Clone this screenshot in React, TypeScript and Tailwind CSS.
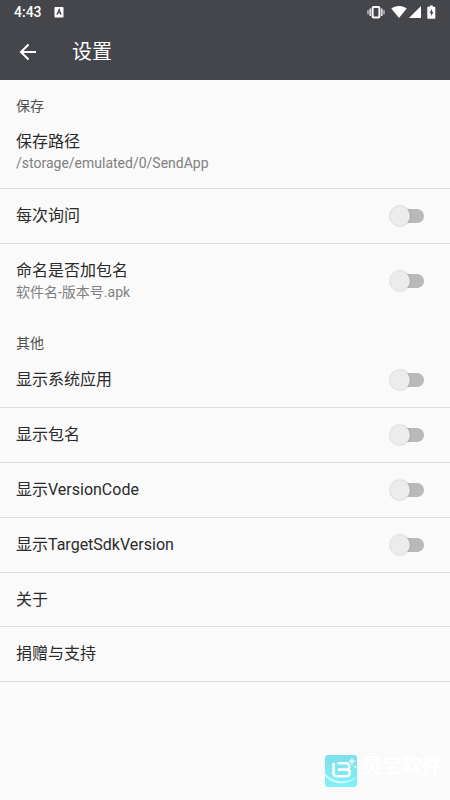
import { useState } from "react";

type Item = {
    id: string;
    title: string;
    summary?: string;
    toggle?: boolean;
};

const saveItems: Item[] = [
    { id: "path", title: "保存路径", summary: "/storage/emulated/0/SendApp" },
    { id: "ask", title: "每次询问", toggle: true },
    { id: "naming", title: "命名是否加包名", summary: "软件名-版本号.apk", toggle: true },
];

const otherItems: Item[] = [
    { id: "system", title: "显示系统应用", toggle: true },
    { id: "package", title: "显示包名", toggle: true },
    { id: "versionCode", title: "显示VersionCode", toggle: true },
    { id: "targetSdk", title: "显示TargetSdkVersion", toggle: true },
    { id: "about", title: "关于" },
    { id: "donate", title: "捐赠与支持" },
];

function StatusBar() {
    return (
        <div className="flex h-6 items-center justify-between px-3.5">
            <div className="flex items-center gap-3">
                <span className="text-sm leading-6 font-medium">4:43</span>
                <svg viewBox="0 0 10 12" className="h-3 w-2.5" aria-hidden="true">
                    <rect x="0.5" y="1" width="9" height="10.5" rx="0.8" fill="#fff" />
                    <path d="M3 8.8 5.2 3.4 7 8.8M3.7 7h2.600" fill="none" stroke="#45464b" strokeWidth="1.2" />
                </svg>
            </div>
            <div className="flex items-center" aria-hidden="true">
                {/* vibrate */}
                <svg viewBox="0 0 18 14" className="mr-1.5 h-3.5 w-[18px]">
                    <rect x="5.6" y="2" width="6.800" height="10.400" rx="1" fill="none" stroke="#fff" strokeWidth="2" />
                    <path d="M3.200 3.500v7.500M14.800 3.500v7.500" stroke="#fff" strokeOpacity="0.85" strokeWidth="1.600" />
                    <path d="M1 5.200v4M17 5.200v4" stroke="#fff" strokeOpacity="0.7" strokeWidth="1.400" />
                </svg>
                {/* wifi */}
                <svg viewBox="0 0 16 12" className="mr-0.5 h-3 w-4">
                    <path d="M8 12 .3 2.600C2.300 1 5 0 8 0s5.700 1 7.700 2.600z" fill="#fff" />
                </svg>
                {/* signal */}
                <svg viewBox="0 0 12 12" className="mr-1.5 h-3 w-3">
                    <path d="M12 0v12H0z" fill="#fff" />
                </svg>
                {/* battery */}
                <svg viewBox="0 0 9 14" className="h-3.5 w-[9px]">
                    <path d="M2.800 0.500h3v1.300h1.700q.8 0 .8.800v10.400q0 .8-.8.800h-6.400q-.8 0-.8-.8V2.600q0-.8.8-.8h1.700z" fill="#fff" />
                    <path d="M5 3.800 2.600 8.300h1.500v3l2.400-4.500H5z" fill="#45464b" />
                </svg>
            </div>
        </div>
    );
}

function Toggle({ id, checked, onChange }: { id: string; checked: boolean; onChange: () => void }) {
    return (
        <span className="relative flex h-6 w-9 shrink-0 items-center">
            <input id={id} type="checkbox" role="switch" checked={checked} onChange={onChange} className="peer absolute inset-0 z-10 m-0 cursor-pointer opacity-0" />
            <span className="ml-1.5 h-3.5 w-7 rounded-full bg-[#b9b9b9] peer-checked:bg-teal-200" />
            <span className="absolute left-0 h-5 w-5 rounded-full bg-[#ececec] shadow-[0_0_2px_rgba(0,0,0,0.3)] peer-checked:left-4 peer-checked:bg-teal-600" />
        </span>
    );
}

function rowHeight(item: Item) {
    if (item.summary) return "min-h-[73px]";
    return item.toggle ? "min-h-[55px]" : "min-h-[54px]";
}

function Row({ item, checked, onToggle }: { item: Item; checked: boolean; onToggle: () => void }) {
    const text = (
        <span className="block">
            <span className="block text-base leading-[22px] text-[#2a2a2a]">{item.title}</span>
            {item.summary && <span className="block text-sm leading-5 text-[#808080]">{item.summary}</span>}
        </span>
    );

    if (item.toggle) {
        return (
            <label htmlFor={item.id} className={`flex items-center justify-between pr-6 pl-4 ${rowHeight(item)}`}>
                {text}
                <Toggle id={item.id} checked={checked} onChange={onToggle} />
            </label>
        );
    }
    return (
        <button type="button" className={`flex w-full items-center px-4 text-left ${rowHeight(item)}`}>
            {text}
        </button>
    );
}

function Watermark() {
    return (
        <div className="pointer-events-none fixed right-2 bottom-3 flex items-start gap-1">
            <svg viewBox="0 0 34 34" className="h-[34px] w-[34px]" aria-hidden="true">
                <defs>
                    <linearGradient id="badge" x1="0" y1="0" x2="0" y2="1">
                        <stop offset="0" stopColor="#7ee0ec" />
                        <stop offset="1" stopColor="#80f0f7" />
                    </linearGradient>
                </defs>
                <rect x="1" y="1" width="32" height="32" rx="3" fill="url(#badge)" />
                <path d="M1 19c7 9 20 11 32 4-9 8-24 9-32-1z" fill="#d5fbfd" />
                <path d="M9.500 9v10q0 3.300 3.300 3.300H22q3.800 0 3.800-3.500 0-2.800-2.800-3.300 2.300-.6 2.300-3.100 0-3.200-3.600-3.200H13.500M14 15.600h9" fill="none" stroke="#fff" strokeWidth="2.600" />
                <path d="m28 3.500 1 2.800 2.800 1-2.800 1-1 2.800-1-2.800-2.800-1 2.800-1zM31.200 11l.5 1.300 1.300.5-1.300.5-.5 1.300-.5-1.300-1.300-.5 1.300-.5z" fill="#fff" />
            </svg>
            <span className="text-xl leading-6 font-bold text-white">灵宝软件</span>
        </div>
    );
}

export default function App() {
    const [enabled, setEnabled] = useState<Record<string, boolean>>({});
    const toggle = (id: string) => setEnabled((prev) => ({ ...prev, [id]: !prev[id] }));

    const renderItems = (items: Item[]) =>
        items.map((item) => <Row key={item.id} item={item} checked={!!enabled[item.id]} onToggle={() => toggle(item.id)} />);

    return (
        <div className="min-h-screen bg-[#fafafa] font-['Roboto','Noto_Sans_CJK_SC',sans-serif]">
            <header className="bg-[#45464b] text-white">
                <StatusBar />
                <div className="flex h-14 items-center gap-8 px-4">
                    <button type="button" aria-label="返回" className="flex h-6 w-6 items-center justify-center">
                        <svg viewBox="0 0 24 24" className="h-6 w-6" fill="none" stroke="#fff" strokeWidth="2">
                            <path d="M20 12H5.500M12.500 4.500 5 12l7.500 7.500" />
                        </svg>
                    </button>
                    <h1 className="text-xl leading-7">设置</h1>
                </div>
            </header>

            <main>
                <section>
                    <h2 className="pt-4 pl-4 text-sm leading-5 text-[#505050]">保存</h2>
                    <div className="divide-y divide-[#dcdcdc]">{renderItems(saveItems)}</div>
                </section>
                <section>
                    <h2 className="pt-4 pl-4 text-sm leading-5 text-[#505050]">其他</h2>
                    <div className="divide-y divide-[#dcdcdc] border-b border-[#dcdcdc]">{renderItems(otherItems)}</div>
                </section>
            </main>

            <Watermark />
        </div>
    );
}
